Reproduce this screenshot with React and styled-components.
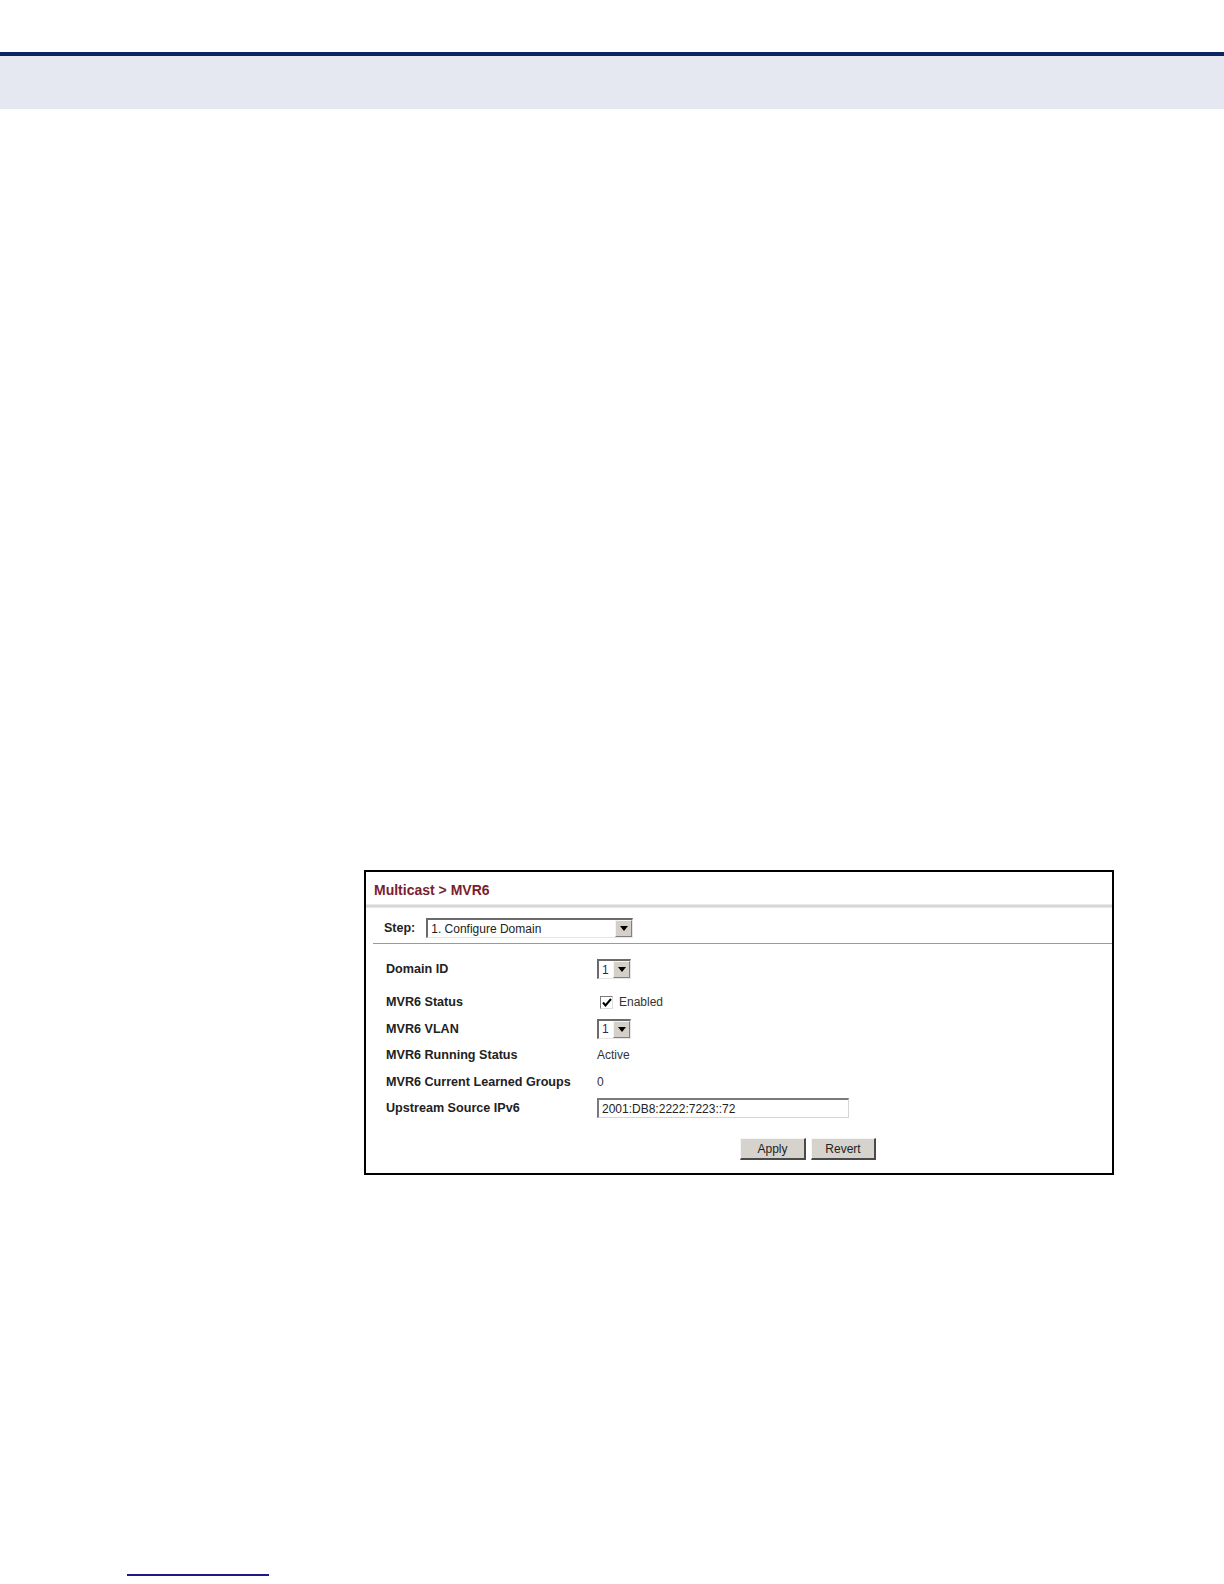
import React from 'react';
import styled, { createGlobalStyle } from 'styled-components';

const GlobalStyles = createGlobalStyle`
    html, body {
        margin: 0;
        padding: 0;
        background: #fff;
    }
    body {
        font-family: 'Liberation Sans', Arial, sans-serif;
    }
`;

const Page = styled.div`
    width: 1224px;
    height: 1584px;
    display: flex;
    flex-direction: column;
    overflow: hidden;
`;

const HeaderBand = styled.div`
    margin-top: 52px;
    height: 53px;
    border-top: 4px solid #0c2461;
    background: #e5e8f0;
`;

const Panel = styled.div`
    box-sizing: border-box;
    margin: 761px 0 0 364px;
    width: 750px;
    height: 305px;
    border: 2px solid #000;
    display: flex;
    flex-direction: column;
`;

const TitleBar = styled.div`
    height: 32px;
    display: flex;
    align-items: center;
    padding-left: 8px;
    padding-top: 4px;
    box-sizing: border-box;
    font-size: 14px;
    font-weight: bold;
    color: #7a1e2e;
`;

const Shadow = styled.div`
    height: 4px;
    background: linear-gradient(#f2f2f2, #cfcfcf 50%, #ececec);
`;

const StepRow = styled.div`
    display: flex;
    align-items: center;
    gap: 11px;
    margin-top: 10px;
    padding-left: 18px;
    height: 20px;
    font-size: 12.5px;
    font-weight: bold;
    color: #222;
`;

const Divider = styled.div`
    margin: 5px 0 0 7px;
    height: 1px;
    background: #9a9a9a;
`;

const Fields = styled.div`
    display: flex;
    flex-direction: column;
    padding: 12px 0 0 20px;
`;

const Row = styled.div`
    display: flex;
    align-items: center;
    height: ${p => p.$h || 26}px;
    margin-bottom: ${p => p.$mb || 0}px;
`;

const Label = styled.div`
    width: 211px;
    font-size: 12.6px;
    font-weight: bold;
    color: #222;
`;

const Value = styled.div`
    display: flex;
    align-items: center;
    gap: 6px;
    font-size: 12px;
    color: #333;
    padding-left: ${p => p.$pl || 0}px;
`;

const SelectBox = styled.div`
    box-sizing: border-box;
    width: ${p => p.$w}px;
    height: 20px;
    display: flex;
    align-items: stretch;
    border-top: 2px solid #6a6a6a;
    border-left: 2px solid #6a6a6a;
    border-right: 1px solid #e6e6e6;
    border-bottom: 1px solid #e6e6e6;
    background: #fff;
    font-size: 12px;
    font-weight: normal;
`;

const SelectText = styled.div`
    flex: 1;
    display: flex;
    align-items: center;
    padding-left: 3px;
    color: ${p => p.$color || '#222'};
`;

const ArrowButton = styled.div`
    box-sizing: border-box;
    width: 17px;
    display: flex;
    align-items: center;
    justify-content: center;
    background: #d4d0c8;
    border-top: 1px solid #f4f4f4;
    border-left: 1px solid #f4f4f4;
    border-right: 1px solid #808080;
    border-bottom: 1px solid #808080;
`;

const Check = styled.div`
    box-sizing: border-box;
    width: 13px;
    height: 13px;
    margin-left: 3px;
    border-top: 1px solid #7a7a7a;
    border-left: 1px solid #7a7a7a;
    border-right: 1px solid #dcdcdc;
    border-bottom: 1px solid #dcdcdc;
    background: #fff;
    display: flex;
    align-items: center;
    justify-content: center;
`;

const TextInput = styled.div`
    box-sizing: border-box;
    width: 252px;
    height: 20px;
    display: flex;
    align-items: center;
    padding-left: 3px;
    border-top: 2px solid #7a7a7a;
    border-left: 2px solid #7a7a7a;
    border-right: 1px solid #d6d6d6;
    border-bottom: 1px solid #d6d6d6;
    font-size: 12px;
    color: #222;
`;

const Buttons = styled.div`
    display: flex;
    gap: 5px;
    margin-top: 17px;
    padding-left: 374px;
`;

const Button = styled.div`
    box-sizing: border-box;
    width: ${p => p.$w}px;
    height: 22px;
    display: flex;
    align-items: center;
    justify-content: center;
    background: #d6d3cc;
    border-top: 1px solid #f6f6f6;
    border-left: 1px solid #f6f6f6;
    border-right: 2px solid #4a4a4a;
    border-bottom: 2px solid #4a4a4a;
    font-size: 12px;
    color: #222;
`;

const FootRule = styled.div`
    margin: 399px 0 0 127px;
    width: 142px;
    height: 2px;
    background: #1a1a8c;
`;

const Arrow = () => (
    <svg width="8" height="5" viewBox="0 0 8 5">
        <path d="M0 0H8L4 5Z" fill="#000" />
    </svg>
);

const Select = ({ width, text, color }) => (
    <SelectBox $w={width}>
        <SelectText $color={color}>{text}</SelectText>
        <ArrowButton>
            <Arrow />
        </ArrowButton>
    </SelectBox>
);

export default function App() {
    return (
        <Page>
            <GlobalStyles />
            <HeaderBand />
            <Panel>
                <TitleBar>Multicast &gt; MVR6</TitleBar>
                <Shadow />
                <StepRow>
                    Step:
                    <Select width={207} text="1. Configure Domain" />
                </StepRow>
                <Divider />
                <Fields>
                    <Row $mb={7}>
                        <Label>Domain ID</Label>
                        <Select width={34} text="1" color="#3b2266" />
                    </Row>
                    <Row>
                        <Label>MVR6 Status</Label>
                        <Value>
                            <Check>
                                <svg width="10" height="9" viewBox="0 0 10 9">
                                    <path d="M1 4.5L3.5 7.5L9 1" stroke="#000" strokeWidth="2" fill="none" />
                                </svg>
                            </Check>
                            Enabled
                        </Value>
                    </Row>
                    <Row $h={27}>
                        <Label>MVR6 VLAN</Label>
                        <Select width={34} text="1" color="#3b2266" />
                    </Row>
                    <Row>
                        <Label>MVR6 Running Status</Label>
                        <Value $pl={-2}>Active</Value>
                    </Row>
                    <Row $h={27}>
                        <Label>MVR6 Current Learned Groups</Label>
                        <Value $pl={-1}>0</Value>
                    </Row>
                    <Row>
                        <Label>Upstream Source IPv6</Label>
                        <TextInput>2001:DB8:2222:7223::72</TextInput>
                    </Row>
                </Fields>
                <Buttons>
                    <Button $w={66}>Apply</Button>
                    <Button $w={65}>Revert</Button>
                </Buttons>
            </Panel>
            <FootRule />
        </Page>
    );
}
